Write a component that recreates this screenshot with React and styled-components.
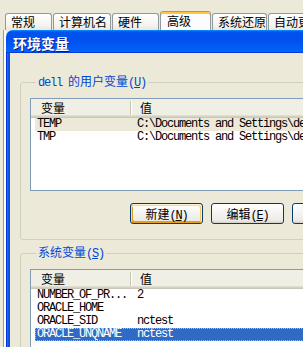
import React from 'react';
import styled, { createGlobalStyle } from 'styled-components';

const GlobalStyle = createGlobalStyle`
  html, body {
    margin: 0;
    padding: 0;
  }
  body {
    background: #ECE9D8;
    font-family: "Noto Sans CJK SC", sans-serif;
    font-size: 12px;
  }
`;

const Screen = styled.div`
  width: 303px;
  height: 347px;
  overflow: hidden;
  background: #ECE9D8;
`;

const TabStrip = styled.div`
  display: flex;
  align-items: flex-end;
  gap: 1px;
  height: 30px;
  padding-left: 5px;
  box-sizing: border-box;
`;

const Tab = styled.div`
  flex: none;
  box-sizing: border-box;
  width: ${p => p.$w}px;
  height: ${p => (p.$active ? 19 : 17)}px;
  padding-left: ${p => (p.$active ? 6 : 5)}px;
  border: 1px solid #919B9C;
  border-bottom: none;
  border-radius: 3px 3px 0 0;
  background: ${p => (p.$active ? '#FCFCFE' : 'linear-gradient(#FFFFFF, #F4F3EE 70%, #E8E7DF)')};
  ${p => p.$active && 'border-top-color: #E68B2C; box-shadow: inset 0 2px #FFC73C;'}
  font-size: 12px;
  line-height: ${p => (p.$active ? 17 : 16)}px;
  color: #000;
  white-space: nowrap;
  overflow: hidden;
`;

const Page = styled.div`
  display: flex;
  height: 317px;
`;

const PageEdge = styled.div`
  flex: none;
  width: 3px;
  margin-left: 3px;
  box-sizing: border-box;
  border-left: 1px solid #919B9C;
  background: #FCFCFE;
`;

const Window = styled.div`
  flex: none;
  width: 420px;
  display: flex;
  flex-direction: column;
`;

const TitleBar = styled.div`
  height: 30px;
  box-sizing: border-box;
  padding: 3px 0 0 7px;
  display: flex;
  align-items: center;
  border-radius: 7px 0 0 0;
  background: linear-gradient(180deg, #0997ff, #0053ee 8%, #0050ee 40%, #0060f8 88%, #0066ff 93%, #005bff 95%, #003dd7 96%, #003dd7);
  color: #fff;
  font-size: 14px;
  font-weight: 700;
  text-shadow: 1px 1px #0A1883;
`;

const Body = styled.div`
  flex: 1;
  padding-left: 14px;
  background: linear-gradient(to right, #0831d9 0 1px, #166aee 1px 2px, #0855dd 2px 4px, #ECE9D8 4px);
`;

const Group = styled.fieldset`
  margin: ${p => p.$top}px 0 0;
  padding: 0 0 15px 9px;
  border: 1px solid #D0D0BF;
  border-radius: 3px;
  min-width: 0;
`;

const Legend = styled.legend`
  margin-left: 6px;
  padding: 0 2px;
  font-size: 12px;
  line-height: 12px;
  color: #0046D5;
  white-space: nowrap;
`;

const Mono = styled.span`
  font-family: "Liberation Mono", monospace;
  font-size: 12px;
  letter-spacing: -1.2px;
`;

const List = styled.div`
  margin-top: 9px;
  height: ${p => p.$h}px;
  box-sizing: border-box;
  border: 1px solid #7F9DB9;
  background: #fff;
  overflow: hidden;
`;

const Header = styled.div`
  display: flex;
  align-items: center;
  height: 19px;
  box-sizing: border-box;
  padding-bottom: 2px;
  background: #F0EFE5;
  box-shadow: inset 0 -1px #CBC7B8, inset 0 -2px #D6D2C2, inset 0 -3px #E2DECD;
`;

const HeadCell = styled.div`
  flex: none;
  box-sizing: border-box;
  width: ${p => p.$w}px;
  padding-left: ${p => p.$pad}px;
  font-size: 12px;
  line-height: 16px;
  color: #000;
`;

const Divider = styled.div`
  flex: none;
  width: 1px;
  height: 14px;
  background: #C7C5B2;
  box-shadow: 1px 0 #fff;
`;

const Row = styled.div`
  display: flex;
  height: 13px;
  margin-left: 4px;
  padding-left: 2px;
  box-sizing: border-box;
  background: ${p => (p.$sel === 'focus' ? '#316AC5' : p.$sel === 'dim' ? '#ECE9D8' : 'transparent')};
  color: ${p => (p.$sel === 'focus' ? '#fff' : '#000')};
  ${p => p.$sel === 'focus' && 'outline: 1px dotted #E3B45A; outline-offset: -1px;'}
`;

const Cell = styled.div`
  flex: none;
  width: ${p => p.$w}px;
  font-family: "Liberation Mono", monospace;
  font-size: 12px;
  line-height: 13px;
  letter-spacing: -1.2px;
  white-space: pre;
`;

const ButtonRow = styled.div`
  display: flex;
  gap: 8px;
  margin-top: 12px;
  padding-left: 100px;
`;

const Button = styled.button`
  flex: none;
  width: 73px;
  height: 21px;
  padding: 0;
  box-sizing: border-box;
  border: 1px solid #003C74;
  border-radius: 3px;
  background: linear-gradient(180deg, #fff, #ecebe6 86%, #d6d0c5);
  font-family: "Noto Sans CJK SC", sans-serif;
  font-size: 12px;
  color: #000;
  ${p => p.$hot && 'box-shadow: inset -1px 1px #fff0cf, inset 1px 2px #fdd889, inset -2px 2px #fbc761, inset 2px -2px #e5a01a;'}
`;

const tabs = [
  { label: '常规', w: 47 },
  { label: '计算机名', w: 58 },
  { label: '硬件', w: 47 },
  { label: '高级', w: 51, active: true },
  { label: '系统还原', w: 55 },
  { label: '自动更新', w: 60 },
];

const userVars = [
  { name: 'TEMP', value: 'C:\\Documents and Settings\\dell\\Local Settings\\Temp', sel: 'dim' },
  { name: 'TMP', value: 'C:\\Documents and Settings\\dell\\Local Settings\\Temp' },
];

const sysVars = [
  { name: 'NUMBER_OF_PR...', value: '2' },
  { name: 'ORACLE_HOME', value: '' },
  { name: 'ORACLE_SID', value: 'nctest' },
  { name: 'ORACLE_UNQNAME', value: 'nctest', sel: 'focus' },
];

function VarList({ rows, height }) {
  return (
    <List $h={height}>
      <Header>
        <HeadCell $w={99} $pad={10}>变量</HeadCell>
        <Divider />
        <HeadCell $w={200} $pad={9}>值</HeadCell>
      </Header>
      {rows.map(r => (
        <Row key={r.name} $sel={r.sel}>
          <Cell $w={100}>{r.name}</Cell>
          <Cell $w={400}>{r.value}</Cell>
        </Row>
      ))}
    </List>
  );
}

export default function App() {
  return (
    <Screen>
      <GlobalStyle />
      <TabStrip>
        {tabs.map(t => (
          <Tab key={t.label} $w={t.w} $active={t.active}>{t.label}</Tab>
        ))}
      </TabStrip>
      <Page>
        <PageEdge />
        <Window>
          <TitleBar>环境变量</TitleBar>
          <Body>
            <Group $top={22}>
              <Legend><Mono>dell </Mono>的用户变量<Mono>(<u>U</u>)</Mono></Legend>
              <VarList rows={userVars} height={93} />
              <ButtonRow>
                <Button $hot>新建<Mono>(<u>N</u>)</Mono></Button>
                <Button>编辑<Mono>(<u>E</u>)</Mono></Button>
                <Button>删除<Mono>(<u>D</u>)</Mono></Button>
              </ButtonRow>
            </Group>
            <Group $top={6}>
              <Legend>系统变量<Mono>(<u>S</u>)</Mono></Legend>
              <VarList rows={sysVars} height={120} />
            </Group>
          </Body>
        </Window>
      </Page>
    </Screen>
  );
}
